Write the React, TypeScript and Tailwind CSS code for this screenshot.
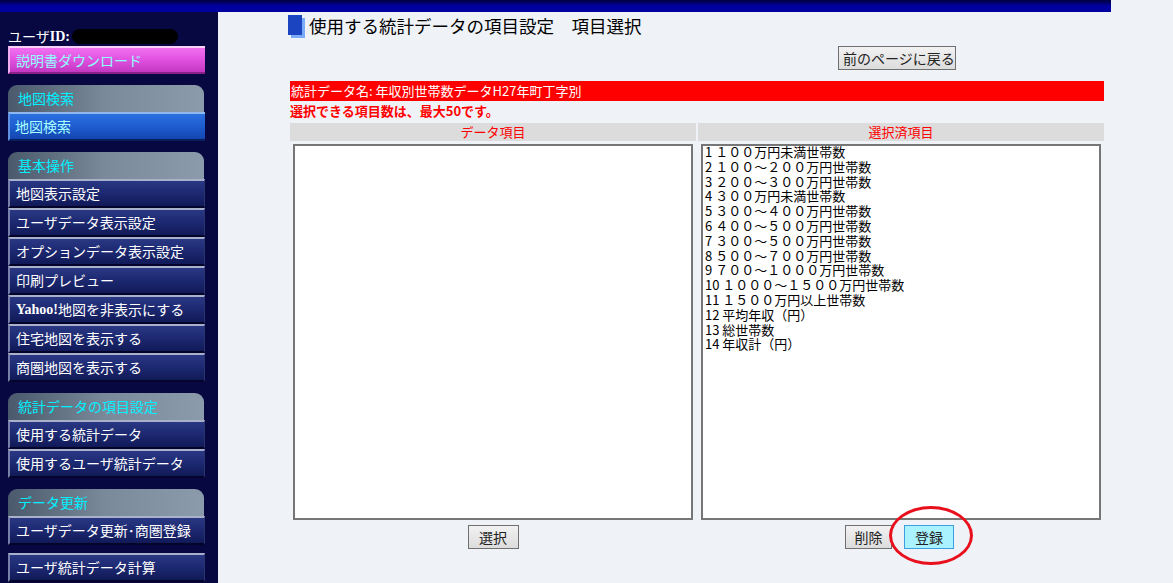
import React from "react";

const font = { fontFamily: '"Noto Sans CJK JP", "Noto Sans", sans-serif' };

const menuGroups: { title: string; items: string[] }[] = [
  {
    title: "基本操作",
    items: [
      "地図表示設定",
      "ユーザデータ表示設定",
      "オプションデータ表示設定",
      "印刷プレビュー",
      "Yahoo!地図を非表示にする",
      "住宅地図を表示する",
      "商圏地図を表示する",
    ],
  },
  {
    title: "統計データの項目設定",
    items: ["使用する統計データ", "使用するユーザ統計データ"],
  },
  {
    title: "データ更新",
    items: ["ユーザデータ更新･商圏登録"],
  },
];

const selectedItems = [
  "1 １００万円未満世帯数",
  "2 １００～２００万円世帯数",
  "3 ２００～３００万円世帯数",
  "4 ３００万円未満世帯数",
  "5 ３００～４００万円世帯数",
  "6 ４００～５００万円世帯数",
  "7 ３００～５００万円世帯数",
  "8 ５００～７００万円世帯数",
  "9 ７００～１０００万円世帯数",
  "10 １０００～１５００万円世帯数",
  "11 １５００万円以上世帯数",
  "12 平均年収（円）",
  "13 総世帯数",
  "14 年収計（円）",
];

function SectionHeader({ title }: { title: string }) {
  return (
    <div className="h-[27px] w-[196px] rounded-t-[9px] bg-gradient-to-r from-[#4a5a6c] via-[#7a8a9a] to-[#8c9bab] pl-[10px] flex items-center text-[14px] text-[#00f0ff]">
      {title}
    </div>
  );
}

function MenuItem({ label }: { label: string }) {
  return (
    <div className="h-[29px] w-[197px] flex items-center pl-[6px] text-[14px] text-white bg-gradient-to-b from-[#2a3884] via-[#1c2870] to-[#111a58] border-t-2 border-t-[#a8b0cc] border-l-2 border-l-[#7880aa] border-b-2 border-b-[#04042a] border-r border-r-[#2c3470] whitespace-nowrap">
      {label.startsWith("Yahoo!") ? (
        <>
          <span className="font-bold" style={{ fontFamily: '"Liberation Serif", serif' }}>Yahoo!</span>
          {label.slice(6)}
        </>
      ) : (
        label
      )}
    </div>
  );
}

function GrayButton({ label, className = "" }: { label: string; className?: string }) {
  return (
    <button className={`h-[24px] px-[4px] border border-[#707070] bg-gradient-to-b from-[#f2f2f2] to-[#dcdcdc] text-[14px] text-[#222] leading-none whitespace-nowrap ${className}`}>
      {label}
    </button>
  );
}

export default function App() {
  return (
    <div className="w-[1173px] h-[583px] overflow-hidden bg-[#eff2f7] relative" style={font}>
      <div className="h-[12px] w-[1111px] bg-gradient-to-b from-[#000040] via-[#0000a0] to-[#0000a0]" />
      <div className="flex">
        {/* サイドバー */}
        <div className="w-[218px] h-[571px] bg-[#070742] pl-[8px] pt-[15px] flex flex-col">
          <div className="h-[19px] flex items-center text-[14px] text-white">
            <span>ユーザ</span>
            <span className="font-bold" style={{ fontFamily: '"Liberation Serif", serif' }}>ID:</span>
            <span className="ml-[2px] w-[106px] h-[15px] rounded-full bg-black" />
          </div>
          <div className="h-[28px] w-[197px] flex items-center pl-[6px] text-[14px] text-[#90ffff] bg-gradient-to-b from-[#f070f0] via-[#e050e0] to-[#c238c2] border-t-2 border-t-[#f8d0f8] border-l-2 border-l-[#f0b0f0] border-b-2 border-b-[#8a208a]">
            説明書ダウンロード
          </div>
          <div className="mt-[11px]">
            <SectionHeader title="地図検索" />
          </div>
          <div className="h-[29px] w-[197px] flex items-center pl-[5px] text-[14px] text-[#a8ffff] bg-gradient-to-b from-[#2a70e0] via-[#1e5cd0] to-[#1446b0] border-t-2 border-t-[#90b8f0] border-l-2 border-l-[#6090e0] border-b-2 border-b-[#08205a]">
            地図検索
          </div>
          {menuGroups.map((g) => (
            <div key={g.title} className="mt-[11px] flex flex-col">
              <SectionHeader title={g.title} />
              {g.items.map((it) => (
                <MenuItem key={it} label={it} />
              ))}
            </div>
          ))}
          <div className="mt-[8px]">
            <MenuItem label="ユーザ統計データ計算" />
          </div>
        </div>

        {/* メイン */}
        <div className="w-[814px] ml-[72px] flex flex-col">
          <div className="flex items-center h-[26px] -ml-[2px] mt-[1px]">
            <div className="relative w-[17px] h-[23px] mr-[4px]">
              <div className="absolute left-[3px] top-[3px] w-[14px] h-[20px] bg-[#7aaaf8]" />
              <div className="absolute left-0 top-0 w-[14px] h-[20px] bg-[#1a44c0]" />
            </div>
            <span className="text-[17.5px] text-black whitespace-pre">使用する統計データの項目設定　項目選択</span>
          </div>
          <div className="flex justify-end pr-[148px] mt-[7px]">
            <GrayButton label="前のページに戻る" className="w-[118px]" />
          </div>
          <div className="mt-[11px] h-[20px] bg-[#ff0000] text-white text-[13px] flex items-center pl-[1px]">
            統計データ名: 年収別世帯数データH27年町丁字別
          </div>
          <div className="h-[19px] text-[#ff0000] text-[13px] font-bold flex items-center">
            選択できる項目数は、最大50です。
          </div>
          <div className="mt-[3px] grid grid-cols-2 gap-x-[2px]">
            <div className="flex flex-col items-center">
              <div className="w-full h-[18px] bg-[#dcdcdc] text-[#ff0000] text-[13px] flex items-center justify-center">
                データ項目
              </div>
              <div className="mt-[3px] w-[400px] h-[376px] bg-white border-2 border-[#767676]" />
              <GrayButton label="選択" className="mt-[5px] w-[51px]" />
            </div>
            <div className="flex flex-col items-center">
              <div className="w-full h-[18px] bg-[#dcdcdc] text-[#ff0000] text-[13px] flex items-center justify-center">
                選択済項目
              </div>
              <div className="mt-[3px] w-[400px] h-[376px] bg-white border-2 border-[#767676] pl-[2px] text-[13px] leading-[14.8px] text-black">
                <div className="-mt-[1px]">
                  {selectedItems.map((s) => (
                    <div key={s} className="whitespace-nowrap">{s}</div>
                  ))}
                </div>
              </div>
              <div className="mt-[5px] w-full flex pl-[147px] gap-[12px]">
                <GrayButton label="削除" className="w-[47px]" />
                <button className="h-[24px] w-[50px] border border-[#3aa0e0] bg-[#aaf2ff] text-[14px] text-[#222] leading-none">
                  登録
                </button>
              </div>
            </div>
          </div>
        </div>
      </div>
      {/* 赤い丸 */}
      <div className="absolute left-[889px] top-[506px] w-[84px] h-[59px] rounded-[50%] border-[3px] border-[#e8101c]" />
    </div>
  );
}
